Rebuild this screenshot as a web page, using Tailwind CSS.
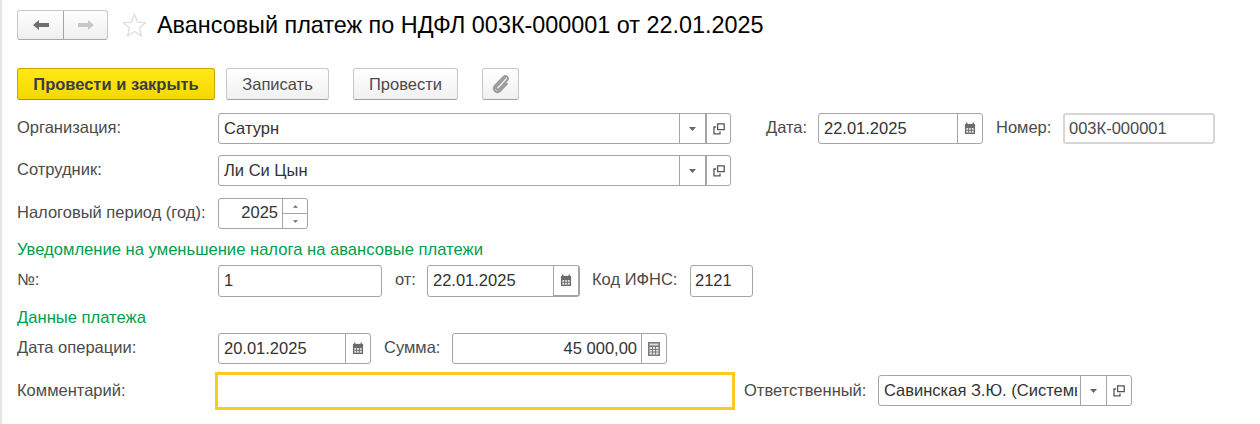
<!DOCTYPE html>
<html lang="ru">
<head>
<meta charset="UTF-8">
<title>Авансовый платеж по НДФЛ</title>
<script src="https://cdn.jsdelivr.net/npm/@tailwindcss/browser@4"></script>
</head>
<body class="bg-white overflow-hidden">
<div class="h-[424px] w-[1260px] border-l-2 border-[#e6e6e6] pl-[15px] font-['Liberation_Sans',sans-serif] text-[16.5px] leading-[20px] text-[#4b4b4b]">

  <!-- header -->
  <div class="flex items-center pt-[10px] h-[40px]">
    <div class="flex h-[30px] w-[91px] rounded-[3px] border border-[#c8c8c8] border-b-[#a8a8a8] bg-gradient-to-b from-white to-[#efefef]">
      <div class="flex w-[46px] items-center justify-center border-r border-[#a5a5a5]">
        <svg width="18" height="14" viewBox="0 0 18 14"><path d="M1 7l6-5v3h10v4H7v3z" fill="#6e6e6e"/></svg>
      </div>
      <div class="flex flex-1 items-center justify-center">
        <svg width="18" height="14" viewBox="0 0 18 14"><path d="M17 7l-6-5v3H1v4h10v3z" fill="#c8c8c8"/></svg>
      </div>
    </div>
    <svg class="ml-[14px]" width="25" height="25" viewBox="0 0 25 25"><path d="M12.5 1.5l3.1 7.6 8 .6-6.2 5.2 2 7.9-6.9-4.3-6.9 4.3 2-7.9-6.2-5.2 8-.6z" fill="#fff" stroke="#dedede" stroke-width="1.3"/></svg>
    <h1 class="ml-[10px] mt-[2px] text-[23.4px] leading-none text-black whitespace-nowrap">Авансовый платеж по НДФЛ 003К-000001 от 22.01.2025</h1>
  </div>

  <!-- command bar -->
  <div class="mt-[28px] flex h-[32px]">
    <button class="w-[198px] rounded-[3px] border border-[#c9a800] border-b-[#b09400] bg-gradient-to-b from-[#ffe716] to-[#f5d800] font-bold text-[#3d3d3d]">Провести и закрыть</button>
    <button class="ml-[11px] w-[103px] rounded-[3px] border border-[#c8c8c8] border-b-[#a0a0a0] bg-gradient-to-b from-white to-[#f0f0f0]">Записать</button>
    <button class="ml-[24px] w-[105px] rounded-[3px] border border-[#c8c8c8] border-b-[#a0a0a0] bg-gradient-to-b from-white to-[#f0f0f0]">Провести</button>
    <button class="ml-[24px] flex w-[37px] items-center justify-center rounded-[3px] border border-[#c8c8c8] border-b-[#a0a0a0] bg-gradient-to-b from-white to-[#f0f0f0]">
      <svg width="20" height="20" viewBox="0 0 18 18" fill="none" stroke="#9c9c9c" stroke-width="1.9" stroke-linecap="round"><path d="M12.5 3.5L5 11.5c-1.2 1.4.8 3.4 2.2 2.1l7.3-7.9c2-2.2-1.2-5.2-3.3-3L3.6 10.6c-3 3.2 1.6 7.6 4.7 4.5l6-6.3"/></svg>
    </button>
  </div>

  <!-- Организация -->
  <div class="mt-[13px] flex h-[31px]">
    <div class="w-[201px] pt-[4px]">Организация:</div>
    <div class="flex w-[513px] rounded-[3px] border border-[#a5a5a5] bg-white">
      <div class="flex-1 pl-[5px] pt-[4px] text-[#333]">Сатурн</div>
      <div class="flex w-[26px] items-center justify-center border-l border-[#a5a5a5]">
        <svg width="7" height="4" viewBox="0 0 7 4"><path d="M0 0h7L3.5 4z" fill="#666"/></svg>
      </div>
      <div class="flex w-[25px] items-center justify-center border-l-2 border-[#a5a5a5]">
        <svg width="12" height="12" viewBox="0 0 12 12" fill="none" stroke="#555" stroke-width="1.3"><path d="M4.6 .8h6.6v5.8H4.6zM3 4H1v6.8h6V8.4"/></svg>
      </div>
    </div>
    <div class="ml-[35px] w-[52px] pt-[4px]">Дата:</div>
    <div class="flex w-[165px] rounded-[3px] border border-[#a5a5a5] bg-white">
      <div class="flex-1 pl-[5px] pt-[4px] text-[#333]">22.01.2025</div>
      <div class="flex w-[25px] items-center justify-center border-l border-[#a5a5a5]">
        <svg width="12" height="13" viewBox="0 0 13 13"><path d="M1 1.5h11v11H1z" fill="#6b6b6b"/><path d="M3 0v3M10 0v3" stroke="#6b6b6b" stroke-width="1.4"/><path d="M2.5 6h8v5h-8z" fill="#e4e4e4"/><path d="M5 6v5M8 6v5M2.5 8.5h8" stroke="#6b6b6b"/></svg>
      </div>
    </div>
    <div class="ml-[13px] w-[67px] pt-[4px]">Номер:</div>
    <div class="w-[152px] rounded-[3px] border-2 border-[#d6d6d6] pl-[4px] pt-[3px] text-[#4b4b4b]">003К-000001</div>
  </div>

  <!-- Сотрудник -->
  <div class="mt-[11px] flex h-[31px]">
    <div class="w-[201px] pt-[4px]">Сотрудник:</div>
    <div class="flex w-[513px] rounded-[3px] border border-[#a5a5a5] bg-white">
      <div class="flex-1 pl-[5px] pt-[4px] text-[#333]">Ли Си Цын</div>
      <div class="flex w-[26px] items-center justify-center border-l border-[#a5a5a5]">
        <svg width="7" height="4" viewBox="0 0 7 4"><path d="M0 0h7L3.5 4z" fill="#666"/></svg>
      </div>
      <div class="flex w-[25px] items-center justify-center border-l-2 border-[#a5a5a5]">
        <svg width="12" height="12" viewBox="0 0 12 12" fill="none" stroke="#555" stroke-width="1.3"><path d="M4.6 .8h6.6v5.8H4.6zM3 4H1v6.8h6V8.4"/></svg>
      </div>
    </div>
  </div>

  <!-- Налоговый период -->
  <div class="mt-[12px] flex h-[31px]">
    <div class="w-[201px] pt-[4px]">Налоговый период (год):</div>
    <div class="flex w-[90px] rounded-[3px] border border-[#a5a5a5] bg-white">
      <div class="flex-1 pr-[4px] pt-[3px] text-right text-[#333]">2025</div>
      <div class="flex w-[25px] flex-col border-l border-[#a5a5a5]">
        <div class="flex flex-1 items-center justify-center border-b border-[#a5a5a5]">
          <svg width="5" height="3" viewBox="0 0 6 3"><path d="M0 3h6L3 0z" fill="#666"/></svg>
        </div>
        <div class="flex flex-1 items-center justify-center">
          <svg width="5" height="3" viewBox="0 0 6 3"><path d="M0 0h6L3 3z" fill="#666"/></svg>
        </div>
      </div>
    </div>
  </div>

  <div class="mt-[12px] h-[17px] text-[16.6px] leading-[17px] text-[#00a04b]">Уведомление на уменьшение налога на авансовые платежи</div>

  <!-- № -->
  <div class="mt-[7px] flex h-[32px]">
    <div class="w-[201px] pt-[4px]">№:</div>
    <div class="w-[164px] rounded-[3px] border border-[#a5a5a5] pl-[5px] pt-[4px] text-[#333]">1</div>
    <div class="ml-[13px] w-[32px] pt-[4px]">от:</div>
    <div class="flex w-[153px] rounded-[3px] border border-[#a5a5a5] bg-white">
      <div class="flex-1 pl-[5px] pt-[4px] text-[#333]">22.01.2025</div>
      <div class="flex w-[26px] items-center justify-center border-l border-r border-b border-[#a5a5a5]">
        <svg width="12" height="13" viewBox="0 0 13 13"><path d="M1 1.5h11v11H1z" fill="#6b6b6b"/><path d="M3 0v3M10 0v3" stroke="#6b6b6b" stroke-width="1.4"/><path d="M2.5 6h8v5h-8z" fill="#e4e4e4"/><path d="M5 6v5M8 6v5M2.5 8.5h8" stroke="#6b6b6b"/></svg>
      </div>
    </div>
    <div class="ml-[12px] w-[98px] pt-[4px]">Код ИФНС:</div>
    <div class="w-[63px] rounded-[3px] border border-[#a5a5a5] pl-[4px] pt-[4px] text-[#333]">2121</div>
  </div>

  <div class="mt-[12px] h-[17px] text-[16.6px] leading-[17px] text-[#00a04b]">Данные платежа</div>

  <!-- Дата операции -->
  <div class="mt-[7px] flex h-[31px]">
    <div class="w-[201px] pt-[4px]">Дата операции:</div>
    <div class="flex w-[153px] rounded-[3px] border border-[#a5a5a5] bg-white">
      <div class="flex-1 pl-[5px] pt-[4px] text-[#333]">20.01.2025</div>
      <div class="flex w-[25px] items-center justify-center border-l border-[#a5a5a5]">
        <svg width="12" height="13" viewBox="0 0 13 13"><path d="M1 1.5h11v11H1z" fill="#6b6b6b"/><path d="M3 0v3M10 0v3" stroke="#6b6b6b" stroke-width="1.4"/><path d="M2.5 6h8v5h-8z" fill="#e4e4e4"/><path d="M5 6v5M8 6v5M2.5 8.5h8" stroke="#6b6b6b"/></svg>
      </div>
    </div>
    <div class="ml-[13px] w-[68px] pt-[4px]">Сумма:</div>
    <div class="flex w-[215px] rounded-[3px] border border-[#a5a5a5] bg-white">
      <div class="flex-1 pr-[4px] pt-[4px] text-right text-[#333]">45 000,00</div>
      <div class="flex w-[25px] items-center justify-center border-l border-[#a5a5a5]">
        <svg width="12" height="14" viewBox="0 0 12 14"><path d="M0 0h12v14H0z" fill="#7a7a7a"/><path d="M1.5 1.5h9v2h-9z" fill="#d8d8d8"/><path d="M1.5 5h9v7.5h-9z" fill="#e4e4e4"/><path d="M4.5 5v7.5M7.5 5v7.5M1.5 7.5h9M1.5 10h9" stroke="#7a7a7a"/></svg>
      </div>
    </div>
  </div>

  <!-- Комментарий -->
  <div class="mt-[8px] flex h-[38px]">
    <div class="w-[198px] pt-[8px]">Комментарий:</div>
    <div class="w-[520px] border-[3px] border-[#fbc91f] bg-white"></div>
    <div class="ml-[9px] w-[134px] pt-[8px] whitespace-nowrap">Ответственный:</div>
    <div class="mt-[3px] flex h-[31px] w-[254px] rounded-[3px] border border-[#a5a5a5] bg-white">
      <div class="mr-[3px] flex-1 overflow-hidden whitespace-nowrap pl-[5px] pt-[4px] text-[#333]">Савинская З.Ю. (Системы</div>
      <div class="flex w-[26px] items-center justify-center border-l border-[#a5a5a5]">
        <svg width="7" height="4" viewBox="0 0 7 4"><path d="M0 0h7L3.5 4z" fill="#666"/></svg>
      </div>
      <div class="flex w-[25px] items-center justify-center border-l border-[#a5a5a5]">
        <svg width="12" height="12" viewBox="0 0 12 12" fill="none" stroke="#555" stroke-width="1.3"><path d="M4.6 .8h6.6v5.8H4.6zM3 4H1v6.8h6V8.4"/></svg>
      </div>
    </div>
  </div>
</div>
</body>
</html>
